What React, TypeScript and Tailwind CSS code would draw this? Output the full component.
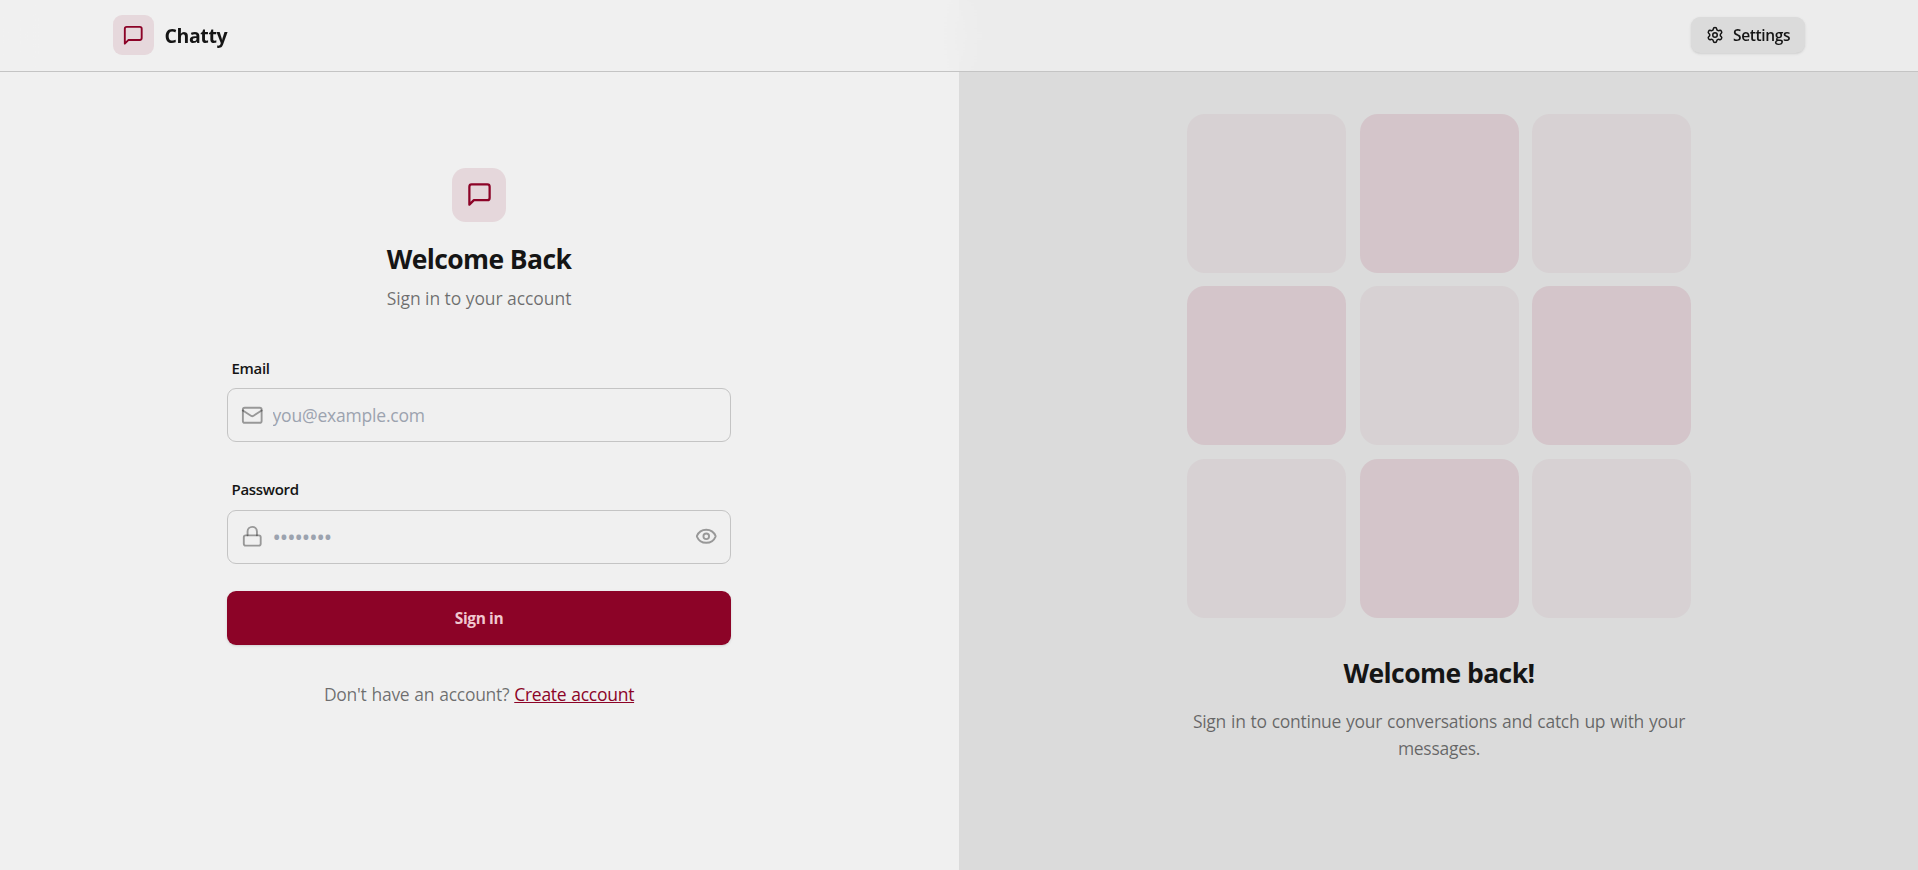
import { Eye, Lock, Mail, Settings } from "lucide-react";
import type { ReactNode } from "react";

function MessageIcon({ className }: { className: string }) {
  return (
    <svg
      viewBox="0 0 24 24"
      fill="none"
      stroke="currentColor"
      strokeWidth="2"
      strokeLinecap="round"
      strokeLinejoin="round"
      className={className}
    >
      <path d="M21 15a2 2 0 0 1-2 2H7l-4 4V5a2 2 0 0 1 2-2h14a2 2 0 0 1 2 2z" />
    </svg>
  );
}

function Header() {
  return (
    <header className="fixed inset-x-0 top-0 z-10 h-[72px] border-b border-[#c4c4c4] bg-[#f0f0f0]/80 backdrop-blur-lg">
      <div className="mx-auto flex h-[70px] max-w-[1728px] items-center justify-between px-[18px]">
        <a className="flex items-center gap-[11px]">
          <span className="flex h-[40.5px] w-[40.5px] items-center justify-center rounded-[9px] bg-[#8c0327]/10">
            <MessageIcon className="h-[22.5px] w-[22.5px] text-[#8c0327]" />
          </span>
          <span className="pt-px text-[19.5px] leading-7 font-bold tracking-[-0.4px]">Chatty</span>
        </a>
        <button className="flex h-9 w-[114px] items-center gap-[9px] rounded-[9px] bg-[#dbdbdb] pl-[15px] text-[15.5px] font-semibold tracking-[-0.35px] shadow-sm">
          <Settings className="h-[18px] w-[18px] shrink-0" />
          <span className="pt-[2px]">Settings</span>
        </button>
      </div>
    </header>
  );
}

type FieldProps = {
  label: string;
  type: string;
  placeholder: string;
  labelClass?: string;
  inputClass: string;
  icon: ReactNode;
  trailing?: ReactNode;
};

function Field({ label, type, placeholder, labelClass = "", inputClass, icon, trailing }: FieldProps) {
  return (
    <label className="block">
      <span
        className={`flex h-[41px] items-center pl-[4.5px] text-[15px] font-semibold tracking-[-0.3px] ${labelClass}`}
      >
        {label}
      </span>
      <span className="flex h-[54px] items-center gap-[9px] rounded-[9px] border border-[#c4c4c4] px-[13px] text-[#151515]/40">
        {icon}
        <input
          type={type}
          placeholder={placeholder}
          className={`min-w-0 flex-1 bg-transparent text-[#151515] outline-none placeholder:text-[#9ca3af] ${inputClass}`}
        />
        {trailing}
      </span>
    </label>
  );
}

function SignInForm() {
  return (
    <section className="flex flex-col items-center pt-[168px] pr-px">
      <span className="flex h-[54px] w-[54px] items-center justify-center rounded-[13.5px] bg-[#8c0327]/10 pb-px">
        <MessageIcon className="h-[27px] w-[27px] text-[#8c0327]" />
      </span>
      <h1 className="mt-[19px] text-[26.5px] leading-9 font-bold tracking-[-0.6px]">Welcome Back</h1>
      <p className="mt-[8px] text-[17.5px] leading-[27px] tracking-[-0.07px] text-[#151515]/60">
        Sign in to your account
      </p>
      <form className="mt-[35px] w-[504px]">
        <Field
          label="Email"
          type="email"
          placeholder="you@example.com"
          labelClass="pt-[2px]"
          inputClass="text-[17.5px] tracking-[-0.2px]"
          icon={<Mail className="h-[22.5px] w-[22.5px] shrink-0" />}
        />
        <div className="mt-[27px]">
          <Field
            label="Password"
            type="password"
            placeholder="••••••••"
            inputClass="pt-[2px] pl-[0.5px] text-[19.5px] placeholder:font-semibold"
            icon={<Lock className="mb-px h-[22.5px] w-[22.5px] shrink-0" />}
            trailing={<Eye className="mb-px h-[22.5px] w-[22.5px] shrink-0" />}
          />
        </div>
        <button
          type="button"
          className="mt-[27px] h-[54px] w-full rounded-[9px] bg-[#8c0327] pt-[2px] text-[15.5px] font-bold tracking-[-0.4px] text-[#f0c8cf] shadow-sm"
        >
          Sign in
        </button>
      </form>
      <p className="mt-[36px] text-[17.5px] leading-[27px] tracking-[-0.28px] text-[#151515]/60 [word-spacing:0.7px]">
        Don't have an account? <a className="text-[#8c0327] underline">Create account</a>
      </p>
    </section>
  );
}

function Pattern() {
  return (
    <section className="flex flex-col items-center bg-[#dbdbdb] pt-[113.8px] pl-px">
      <div className="grid w-[504px] grid-cols-3 gap-[13.5px]">
        {Array.from({ length: 9 }, (_, i) => (
          <div
            key={i}
            className={`aspect-square rounded-[18px] ${i % 2 === 0 ? "bg-[#d7d1d3]" : "bg-[#d4c5ca]"}`}
          />
        ))}
      </div>
      <h2 className="mt-[37px] text-[26.5px] leading-9 font-bold tracking-[-0.55px]">Welcome back!</h2>
      <p className="mt-[17px] w-[504px] text-center text-[17.5px] leading-[27px] tracking-[-0.28px] text-[#151515]/60 [word-spacing:0.7px]">
        Sign in to continue your conversations and catch up with your messages.
      </p>
    </section>
  );
}

export default function App() {
  return (
    <div className="h-screen overflow-hidden bg-[#f0f0f0] font-['Open_Sans','Noto_Sans',sans-serif] text-[#151515]">
      <Header />
      <main className="grid h-full grid-cols-2">
        <SignInForm />
        <Pattern />
      </main>
    </div>
  );
}
